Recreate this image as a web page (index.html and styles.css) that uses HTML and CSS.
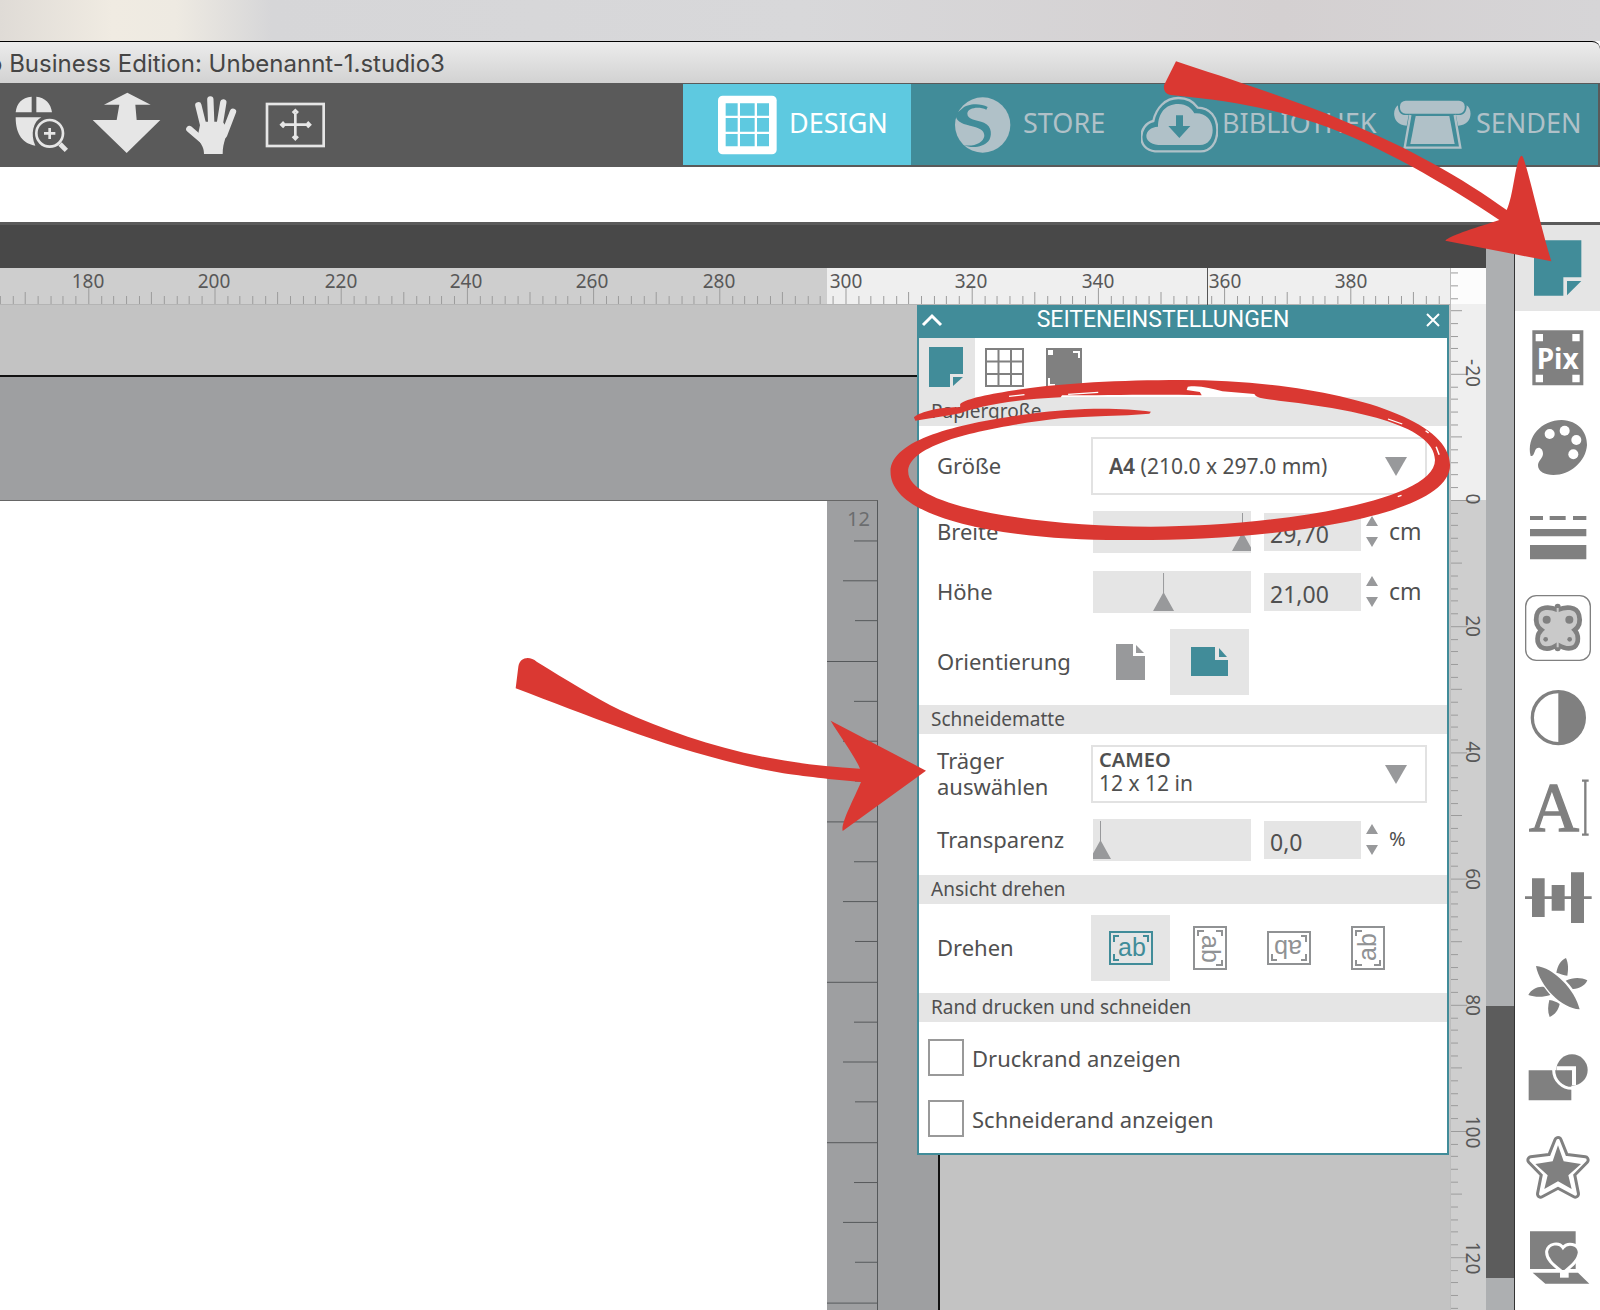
FILE: index.html
```html
<!DOCTYPE html>
<html lang="de">
<head>
<meta charset="utf-8">
<title>Business Edition: Unbenannt-1.studio3</title>
<link rel="stylesheet" href="styles.css">
</head>
<body>
<div class="app">
  <div class="desktop"></div>
  <header class="titlebar"><h1 class="title">o Business Edition: Unbenannt-1.studio3</h1></header>

  <div class="toolbar">
    <div class="tools">
      <button class="tool" aria-label="Zoom"><svg width="54" height="84" viewBox="45 159 162 252"><path d="M47 247C50 220 65 203 95 200V247ZM109 200C135 203 153 220 156 247H109ZM47 262H124C100 275 90 312 106 347C70 342 47 315 47 262Z"/><circle cx="149" cy="310" r="40" class="ln"/><path d="M149 294V327M132 310H166" class="ln"/><path d="M180 342L199 361" class="ln thick"/></svg></button>
      <button class="tool" aria-label="Vertikal"><svg width="69" height="84" viewBox="279 159 207 252"><path d="M382 188L452 224H406L410 270H481L380 369L278 270H350L358 224H312Z"/></svg></button>
      <button class="tool" aria-label="Verschieben"><svg width="55" height="84" viewBox="558 159 165 252"><path d="M568 297L618 340M595 226L612 295M631 208L634 290M670 217L658 290M699 245L672 315" class="finger"/><path d="M602 275H668L682 295C682 320 668 335 668 372H612C612 355 606 345 592 325Z"/></svg></button>
      <button class="tool" aria-label="Einpassen"><svg width="61" height="84" viewBox="795 159 183 252"><rect x="801" y="222" width="170" height="126" class="ln"/><path d="M886 248V322M850 284H924M878 249L886 241L894 249M878 319L886 327L894 319M852 276L844 284L852 292M922 276L930 284L922 292" class="ln"/></svg></button>
    </div>
    <nav class="tabs">
      <button class="tab tab-design"><svg width="59" height="81" viewBox="145 162 177 243"><rect x="145" y="197" width="176" height="176" rx="14"/><path d="M168 220H204V257H168ZM211 220H255V257H211ZM262 220H298V257H262ZM168 264H204V305H168ZM211 264H255V305H211ZM262 264H298V305H262ZM168 312H204V349H168ZM211 312H255V349H211ZM262 312H298V349H262Z" fill="#5ec9e0"/></svg><span>DESIGN</span></button>
      <button class="tab tab-store"><svg width="56" height="81" viewBox="855 162 168 243"><circle cx="938" cy="285" r="83"/><path d="M876 236C890 221 930 218 953 231L949 239C925 228 893 234 892 251C892 268 920 270 942 278C968 289 966 320 955 334C940 352 905 356 882 346C915 350 940 338 943 318C944 299 925 293 900 287C872 281 856 272 857 252Z" fill="#418c99"/></svg><span>STORE</span></button>
      <button class="tab tab-library"><svg width="77" height="81" viewBox="33 162 231 243"><path d="M75 364C20 360 22 285 70 273C78 235 105 204 145 204C170 204 190 214 203 233C240 233 262 262 262 300C262 340 240 364 212 364Z" class="line"/><path d="M85 345C35 340 40 292 84 290C85 250 105 222 145 222C170 222 185 235 193 250C225 247 248 270 248 300C248 325 235 345 210 345Z"/><path d="M138 256H159V288H181L148 324L115 288H138Z" fill="#418c99"/></svg><span>BIBLIOTHEK</span></button>
      <button class="tab tab-send"><svg width="78" height="81" viewBox="792 162 234 243"><rect x="810" y="212" width="194" height="39" rx="17"/><path d="M804 226C784 240 788 285 830 287L836 255H822C808 252 804 240 804 226ZM1010 226C1030 240 1026 285 984 287L978 255H992C1006 252 1010 240 1010 226Z"/><path d="M841 255L824 353H991L974 255" class="line"/><path d="M857 258H958L974 342H841Z"/></svg><span>SENDEN</span></button>
    </nav>
  </div>

  <div class="optionsbar"></div>

  <main class="workspace">
    <div class="docbar"></div>
    <div class="ruler-top">
      <svg class="fill" aria-hidden="true">
        <defs><pattern id="mm" x="845.5" y="0" width="126.2" height="37" patternUnits="userSpaceOnUse"><path d="M.5 20V36M63.5 24V36M13 28V36M25.7 28V36M38.3 28V36M51 28V36M76 28V36M88.6 28V36M101.2 28V36M113.8 28V36" stroke="#9b9b9b"/></pattern></defs>
        <rect width="100%" height="37" fill="#efefef"/><rect width="827" height="37" fill="#cecece"/>
        <rect width="100%" height="37" fill="url(#mm)"/>
        <rect y="36" width="100%" height="1" fill="#b4b4b4"/>
        <rect x="1207" width="1" height="37" fill="#555"/>
        <g class="num"><text x="88" y="20">180</text><text x="214" y="20">200</text><text x="341" y="20">220</text><text x="466" y="20">240</text><text x="592" y="20">260</text><text x="719" y="20">280</text><text x="846" y="20">300</text><text x="971" y="20">320</text><text x="1098" y="20">340</text><text x="1225" y="20">360</text><text x="1351" y="20">380</text></g>
      </svg>
    </div>
    <div class="ruler-side">
      <svg class="fill" aria-hidden="true">
        <defs><pattern id="mmv" x="0" y="232" width="36" height="126.2" patternUnits="userSpaceOnUse"><path d="M0 .5H17M0 63.5H12M0 13H8M0 25.7H8M0 38.3H8M0 51H8M0 76H8M0 88.6H8M0 101.2H8M0 113.8H8" stroke="#9b9b9b"/></pattern></defs>
        <rect width="36" height="36" fill="#fcfcfc"/><rect y="36" width="36" height="196" fill="#efefef"/><rect y="232" width="36" height="100%" fill="#cecece"/>
        <rect width="36" height="100%" fill="url(#mmv)"/><rect width="1" height="100%" fill="#bdbdbd"/>
        <g class="num"><text transform="translate(16 105) rotate(90)">-20</text><text transform="translate(16 231) rotate(90)">0</text><text transform="translate(16 358) rotate(90)">20</text><text transform="translate(16 484) rotate(90)">40</text><text transform="translate(16 611) rotate(90)">60</text><text transform="translate(16 737) rotate(90)">80</text><text transform="translate(16 864) rotate(90)">100</text><text transform="translate(16 990) rotate(90)">120</text></g>
      </svg>
    </div>

    <div class="canvas">
      <div class="mat">
        <div class="sheet"></div>
        <div class="mat-ruler">
          <svg class="fill" aria-hidden="true">
            <defs><pattern id="inch" y="160" width="50" height="160.4" patternUnits="userSpaceOnUse"><path d="M0 .5H50M27 40.5H50M16 80.5H50M28 120.5H50" stroke="#55585a"/></pattern></defs>
            <rect y="20" width="50" height="100%" fill="url(#inch)"/>
            <text x="20" y="25" class="inch">12</text>
          </svg>
        </div>
      </div>

      <section class="panel">
        <header class="panel-head">
          <button class="head-btn" aria-label="Einklappen"><svg width="24" height="14" viewBox="0 0 24 14"><path d="M4 12L13 3L22 12" fill="none" stroke="#fff" stroke-width="3"/></svg></button>
          <h2 class="panel-title">SEITENEINSTELLUNGEN</h2>
          <button class="head-btn" aria-label="Schließen"><svg width="16" height="16" viewBox="0 0 16 16"><path d="M2 2L14 14M14 2L2 14" stroke="#fff" stroke-width="2"/></svg></button>
        </header>
        <div class="panel-tabs">
          <button class="ptab on" aria-label="Seite"><svg width="56" height="59"><path d="M10 9H44V36H31V49H10Z" fill="#418c99"/><path d="M34 39H44L34 48Z" fill="#418c99"/></svg></button>
          <button class="ptab" aria-label="Gitter"><svg width="58" height="59"><path d="M11 11H48V48H11ZM23.500 11V48M36 11V48M11 23.500H48M11 36H48" fill="none" stroke="#808080" stroke-width="2"/></svg></button>
          <button class="ptab" aria-label="Passermarken"><svg width="58" height="59"><path d="M13 10H49V49H13Z" fill="#808080"/><path d="M15 12H20V17H15ZM40 13H47V20H45V15H40ZM15 40H17V46H22V48H15Z" fill="#fff"/></svg></button>
        </div>

        <h3 class="band">Papiergroße</h3>
        <div class="group group-page">
          <div class="row"><label class="name" for="size">Größe</label>
            <div class="picker"><select id="size" class="picker-native"><option>A4 (210.0 x 297.0 mm)</option></select><span class="face face-one"><b>A4</b> (210.0 x 297.0 mm)</span><i class="drop"></i></div></div>
          <div class="row slim"><label class="name" for="w">Breite</label>
            <div class="track"><input class="range" type="range" aria-label="Breite" min="0" max="1000" value="1000"></div>
            <input class="value" id="w" type="text" value="29,70">
            <span class="spin"><button class="up" aria-label="Mehr"></button><button class="down" aria-label="Weniger"></button></span><span class="unit">cm</span></div>
          <div class="row slim"><label class="name" for="h">Höhe</label>
            <div class="track"><input class="range" type="range" aria-label="Höhe" min="0" max="1000" value="444"></div>
            <input class="value" id="h" type="text" value="21,00">
            <span class="spin"><button class="up" aria-label="Mehr"></button><button class="down" aria-label="Weniger"></button></span><span class="unit">cm</span></div>
          <div class="row"><span class="name">Orientierung</span>
            <div class="choices">
              <button class="choice" aria-label="Hochformat"><svg width="30" height="36"><path d="M0 0H17V12H29V36H0Z" fill="#98999b"/><path d="M20 1L28 9H20Z" fill="#98999b"/></svg></button>
              <button class="choice on" aria-label="Querformat"><svg width="38" height="30"><path d="M0 0H24V13H37V29H0Z" fill="#418c99"/><path d="M28 1L36 10H28Z" fill="#418c99"/></svg></button>
            </div></div>
        </div>

        <h3 class="band">Schneidematte</h3>
        <div class="group">
          <div class="row"><label class="name" for="mat">Träger auswählen</label>
            <div class="picker"><select id="mat" class="picker-name"><option>CAMEO</option></select><span class="face face-under">12 x 12 in</span><i class="drop"></i></div></div>
          <div class="row slim"><label class="name" for="t">Transparenz</label>
            <div class="track"><input class="range" type="range" aria-label="Transparenz" min="0" max="1000" value="0"></div>
            <input class="value" id="t" type="text" value="0,0">
            <span class="spin"><button class="up" aria-label="Mehr"></button><button class="down" aria-label="Weniger"></button></span><span class="unit small">%</span></div>
        </div>

        <h3 class="band">Ansicht drehen</h3>
        <div class="group">
          <div class="row"><span class="name">Drehen</span>
            <div class="choices">
              <button class="choice turn on" aria-label="0 Grad"><svg width="46" height="46" viewBox="-23 -23 46 46"><g><rect x="-21" y="-16" width="42" height="32" class="ln2"/><path d="M-17 -6V-12H-12M12 -12H17V-6M-17 6V12H-12" class="ln2"/><text x="1" y="8">ab</text></g></svg></button>
              <button class="choice turn" aria-label="90 Grad"><svg width="46" height="46" viewBox="-23 -23 46 46"><g transform="rotate(90)"><rect x="-21" y="-16" width="42" height="32" class="ln2"/><path d="M-17 -6V-12H-12M12 -12H17V-6M-17 6V12H-12" class="ln2"/><text x="1" y="8">ab</text></g></svg></button>
              <button class="choice turn" aria-label="180 Grad"><svg width="46" height="46" viewBox="-23 -23 46 46"><g transform="rotate(180)"><rect x="-21" y="-16" width="42" height="32" class="ln2"/><path d="M-17 -6V-12H-12M12 -12H17V-6M-17 6V12H-12" class="ln2"/><text x="1" y="8">ab</text></g></svg></button>
              <button class="choice turn" aria-label="270 Grad"><svg width="46" height="46" viewBox="-23 -23 46 46"><g transform="rotate(270)"><rect x="-21" y="-16" width="42" height="32" class="ln2"/><path d="M-17 -6V-12H-12M12 -12H17V-6M-17 6V12H-12" class="ln2"/><text x="1" y="8">ab</text></g></svg></button>
            </div></div>
        </div>

        <h3 class="band">Rand drucken und schneiden</h3>
        <div class="checks">
          <label class="check"><input type="checkbox" class="box">Druckrand anzeigen</label>
          <label class="check"><input type="checkbox" class="box">Schneiderand anzeigen</label>
        </div>
      </section>
    </div>

    <div class="scroll"><div class="thumb"></div></div>

    <aside class="side">
      <button class="item on" aria-label="Seite"><svg viewBox="135 15 255 258"><path d="M192 61H334V172H280V227H192Z" fill="#418c99"/><path d="M291 183H334L291 226Z" fill="#418c99"/></svg></button>
      <button class="item" aria-label="PixScan"><svg viewBox="135 285 255 258"><path d="M187 331H340V496H187Z"/><path d="M197 342H219V364H197ZM307 342H329V364H307ZM197 464H219V487H197ZM307 464H329V487H307Z" fill="#fff"/><text x="263" y="447" class="pix">Pix</text></svg></button>
      <button class="item" aria-label="Füllung"><svg viewBox="135 555 255 258"><path d="M182 708C168 650 215 600 275 600C325 602 351 635 351 675C348 725 300 765 250 765C225 765 203 755 204 735C205 722 218 715 219 702C219 683 203 678 196 690C192 700 190 710 182 708Z"/><g fill="#fff"><circle cx="239" cy="642" r="15"/><circle cx="284" cy="632" r="15"/><circle cx="319" cy="660" r="15"/><circle cx="310" cy="703" r="15"/></g></svg></button>
      <button class="item" aria-label="Linienstil"><svg viewBox="135 825 255 258"><path d="M180 888H219V900H180ZM239 888H287V900H239ZM309 888H349V900H309ZM180 927H349V949H180ZM180 975H349V1018H180Z"/></svg></button>
      <button class="item" aria-label="Nachzeichnen"><svg viewBox="135 15 255 258"><rect x="167" y="47" width="194" height="194" rx="32" fill="none" stroke="#808080" stroke-width="4"/><path d="M263 80V205" stroke="#808080" stroke-width="18" stroke-linecap="round"/><path d="M263 90C240 79 207 78 200 105C195 128 203 142 214 150C200 163 198 188 213 201C230 211 250 203 263 194C278 203 296 211 313 201C328 188 326 163 314 150C325 142 333 128 327 105C320 78 286 79 263 90Z" fill="#c9c9c9" stroke="#808080" stroke-width="14"/><path d="M263 84V104M263 180V202" stroke="#c9c9c9" stroke-width="6"/><circle cx="230" cy="119" r="12"/><circle cx="298" cy="119" r="12"/><circle cx="227" cy="178" r="7"/><circle cx="299" cy="178" r="7"/></svg></button>
      <button class="item" aria-label="Bildeffekte"><svg viewBox="135 285 255 258"><circle cx="265" cy="413" r="78" fill="none" stroke="#808080" stroke-width="10"/><path d="M265 335A78 78 0 0 1 265 491Z"/></svg></button>
      <button class="item" aria-label="Text"><svg viewBox="135 555 255 258"><text x="252" y="752" class="glyph">A</text><path d="M336 602H356M346 602V764M336 764H356" fill="none" stroke="#808080" stroke-width="7"/></svg></button>
      <button class="item" aria-label="Ausrichten"><svg viewBox="135 825 255 258"><path d="M186 895H224V1011H186ZM245 915H284V992H245ZM303 877H342V1029H303ZM165 949H365V957H165Z"/></svg></button>
      <button class="item" aria-label="Replizieren"><svg viewBox="135 15 255 258"><path d="M198 78C250 82 316 150 329 208C275 205 210 140 198 78ZM259 98C263 78 272 60 288 54C296 72 295 90 292 107C280 105 270 101 259 98ZM287 122C310 112 332 112 352 121C345 138 325 148 308 147C302 138 295 130 287 122ZM241 165C220 172 195 172 175 165C183 148 205 138 222 141C228 149 234 157 241 165ZM238 180C250 182 260 186 269 192C266 208 255 225 239 231C232 214 234 197 238 180Z"/></svg></button>
      <button class="item" aria-label="Modifizieren"><svg viewBox="135 285 255 258"><circle cx="306" cy="390" r="47"/><path d="M176 391H304V481H176Z"/><path d="M312 436V385H260" fill="none" stroke="#fff" stroke-width="12"/><path d="M251 390A55 55 0 0 0 308 445" fill="none" stroke="#fff" stroke-width="9"/></svg></button>
      <button class="item" aria-label="Versatz"><svg viewBox="135 555 255 258"><path d="M264 602L284 652L345 660L304 702L316 762L264 734L212 762L224 702L183 660L244 652Z" fill="none" stroke="#808080" stroke-width="28" stroke-linejoin="round"/><path d="M264 602L284 652L345 660L304 702L316 762L264 734L212 762L224 702L183 660L244 652Z" fill="#fff" stroke="#fff" stroke-width="10" stroke-linejoin="round"/><path d="M264 616L281 664L333 672L295 706L305 747L264 724L223 747L233 706L196 672L248 664Z"/></svg></button>
      <button class="item" aria-label="Mein Design"><svg viewBox="135 825 255 258"><path d="M180 874H317V987H180ZM188 998H324L358 1031H226Z"/><path d="M280 998C255 978 228 960 230 934C235 908 268 906 279 923C292 906 325 910 328 936C326 962 302 980 280 998Z" stroke="#fff" stroke-width="9"/><path d="M270 990H296V1013H270Z" fill="#fff"/></svg></button>
    </aside>
  </main>

  <svg class="mark mark-side" viewBox="0 0 1410 870" aria-hidden="true"><path d="M138 94C260 135 470 200 640 272C830 350 1000 445 1130 540C1150 500 1155 400 1172 379Q1176 374 1180 384C1200 440 1230 580 1264 694L946 632C960 615 1050 590 1108 570C950 465 750 345 560 280C420 235 300 212 130 196C100 196 98 170 105 160Z"/></svg>
  <svg class="mark mark-mat" viewBox="0 0 1320 1110" aria-hidden="true"><path d="M47 625L55 560C60 530 90 528 110 545C200 600 280 650 360 690C560 780 780 850 1080 866C1060 820 1020 770 992 722L1278 872L1028 1053C1022 1030 1060 960 1083 906C1000 900 900 887 850 880C560 830 300 720 47 625Z"/></svg>
  <svg class="mark mark-size" viewBox="0 0 1568 810" preserveAspectRatio="none" aria-hidden="true"><path d="M720 365C640 352 520 352 400 371C240 395 28 440 28 545C28 690 340 750 640 750C1000 755 1515 690 1515 525C1515 370 1160 270 800 270C640 270 480 280 380 297C300 310 230 325 213 342V352C170 350 110 362 90 382L94 392C130 385 170 380 213 370C260 350 340 330 480 322L484 316C600 316 740 312 855 316L850 306L815 300L818 290C850 285 880 295 910 304L995 312C1000 325 1020 326 1060 332C1240 355 1475 400 1475 510C1475 640 1020 710 720 710C420 710 75 650 75 545C75 450 330 405 480 385C560 378 640 378 716 371Z"/><path d="M343 319L384 314M500 313L580 307M1350 387L1388 402M1450 422L1458 429M1478 470L1486 494M1376 620L1386 616" stroke="#fff" stroke-width="4"/></svg>
</div>
</body>
</html>
```
FILE: styles.css
```css
* { box-sizing: border-box; }
body { margin: 0; font-family: "Noto Sans", "Open Sans", sans-serif; color: #505050; }
button { margin: 0; padding: 0; border: 0; background: none; font: inherit; color: inherit; }
h1, h2, h3 { margin: 0; font-weight: 400; }
svg { display: block; }

.app { position: relative; display: flex; flex-direction: column; min-height: 100vh; overflow: hidden; background: #fff; }
.desktop { height: 41px; background: linear-gradient(90deg, #dfdbd6, #f0ebe2 7%, #eeeae2 11%, #d6d6d8 17%, #d8d8da 50%, #d4d0d1 80%, #d6d5d7); }
.titlebar { height: 42px; border-top: 1px solid #000; background: linear-gradient(#ececec, #d2d2d2); border-top-right-radius: 8px; overflow: hidden; }
.title { margin-left: -12px; padding-top: 1px; font: 24px/41px Inter, "Liberation Sans", sans-serif; color: #454545; white-space: nowrap; }

.toolbar { display: flex; justify-content: space-between; height: 84px; padding-right: 2px; background: #5a5a5a; }
.tools { display: flex; gap: 24px; padding-left: 15px; }
.tool svg { overflow: visible; fill: #e6e6e6; }
.ln { fill: none; stroke: #e6e6e6; stroke-width: 8; }
.thick { stroke-width: 14; }
.finger { fill: none; stroke: #e6e6e6; stroke-width: 19; stroke-linecap: round; }
.tabs { display: grid; grid-template-columns: 228px 230px 253px 204px; margin: 1px 0 2px; background: #418c99; }
.tab { display: flex; align-items: center; gap: 4px; font-size: 27px; line-height: 36px; color: #b0c1c8; white-space: nowrap; }
.tab span { padding-bottom: 4px; }
.tab svg { flex: none; fill: currentColor; }
.tab .line { fill: none; stroke: currentColor; stroke-width: 7; }
.tab-design { gap: 12px; padding-left: 35px; background: #5ec9e0; color: #fff; }
.tab-store { gap: 12px; padding-left: 44px; }
.optionsbar { height: 55px; }

.workspace { flex: 1; display: grid; grid-template: 43px 37px 1fr / 1fr 36px 28px 86px; border-top: 3px solid #5a5a5a; }
.docbar { grid-column: 1 / 3; background: #484848; }
.ruler-top { grid-area: 2 / 1; overflow: hidden; }
.ruler-side { grid-area: 2 / 2 / 4 / 3; position: relative; overflow: hidden; }
.ruler-side .fill, .mat-ruler .fill { position: absolute; inset: 0; }
.fill { width: 100%; height: 100%; shape-rendering: crispEdges; }
.num { font-size: 19px; fill: #585858; text-anchor: middle; }

.canvas { grid-area: 3 / 1; position: relative; overflow: hidden; background: #c3c3c3; }
.mat { position: absolute; left: 0; top: 70px; bottom: 0; width: 940px; display: flex; padding-top: 123px; border-top: 2px solid #111; border-right: 2px solid #111; background: #9e9fa1; }
.sheet { width: 827px; border-top: 1px solid #666; background: #fff; }
.mat-ruler { position: relative; width: 51px; border-top: 1px solid #666; border-right: 1px solid #55585a; }
.inch { font-size: 20px; fill: #6b6d6f; }

.panel { position: absolute; top: 0; right: 1px; width: 532px; border: 2px solid #418c99; border-top: 0; background: #fff; }
.panel-head { display: flex; align-items: center; justify-content: space-between; height: 33px; padding: 0 6px 3px 0; background: #418c99; color: #fff; }
.panel-title { padding-right: 42px; font: 23px/28px Roboto, sans-serif; }
.panel-tabs { display: flex; height: 59px; }
.ptab.on, .choice.on, .item.on { background: #e5e5e5; }
.band { height: 29px; padding-left: 12px; background: #e5e5e5; font-size: 19px; line-height: 29px; }
.group { display: flex; flex-direction: column; gap: 14px; padding: 11px 20px 12px 18px; font-size: 22px; line-height: 26px; }
.group-page { padding-bottom: 10px; }
.row { display: flex; align-items: center; }
.slim { height: 46px; }
.name { width: 154px; padding-bottom: 2px; }
.slim .name { width: 156px; }
.picker { position: relative; display: flex; align-items: center; justify-content: space-between; width: 336px; height: 58px; padding: 0 18px 0 6px; border: 2px solid #e2e2e2; }
.picker-native { position: absolute; inset: 0; width: 100%; opacity: 0; }
.picker-name { position: absolute; inset: 0; width: 100%; padding: 2px 0 30px 6px; border: 0; background: none; appearance: none; font: 600 20px/22px "Noto Sans", sans-serif; color: inherit; }
.face { font-size: 21px; line-height: 22px; }
.face-one { padding-left: 10px; }
.face-under { padding-top: 18px; pointer-events: none; }
.face b { font-weight: 600; }
.drop { border: 11px solid transparent; border-top: 19px solid #98999b; border-bottom: 0; }
.track { width: 158px; height: 42px; overflow: hidden; background: #e5e5e5; }
.range { appearance: none; display: block; width: 164px; height: 42px; margin: 0 -3px; background: none; }
.range::-webkit-slider-thumb { appearance: none; width: 22px; height: 38px; background: #98999b; clip-path: polygon(10px 0, 11px 0, 11px 20px, 21px 38px, 0 38px, 10px 20px); }
.value { width: 97px; height: 38px; margin-left: 13px; padding: 3px 6px 0; border: 0; background: #e5e5e5; font: 23px/26px "Noto Sans", sans-serif; color: inherit; }
.spin { display: flex; flex-direction: column; gap: 11px; margin-left: 5px; padding-bottom: 2px; }
.up, .down { border: 6px solid transparent; }
.up { border-top: 0; border-bottom: 10px solid #98999b; }
.down { border-bottom: 0; border-top: 10px solid #98999b; }
.unit { margin-left: 11px; padding-bottom: 2px; font-size: 23px; }
.unit.small { font-size: 20px; }
.choices { display: flex; }
.choice { display: flex; align-items: center; justify-content: center; width: 79px; height: 66px; }
.turn { color: #909294; }
.turn.on { color: #418c99; }
.turn svg { fill: currentColor; }
.turn text { font: 25px "Liberation Sans", sans-serif; text-anchor: middle; }
.ln2 { fill: none; stroke: currentColor; stroke-width: 2; }
.checks { display: flex; flex-direction: column; gap: 24px; padding: 17px 9px 16px; }
.check { display: flex; align-items: center; gap: 8px; font-size: 22px; line-height: 36px; }
.box { appearance: none; width: 36px; height: 37px; margin: 0; border: 2px solid #999; background: #fff; }

.scroll { grid-area: 1 / 3 / 4 / 4; display: flex; flex-direction: column; justify-content: flex-end; padding-bottom: 32px; background: #adafb1; }
.thumb { height: 272px; background: #5c5c5c; }
.side { grid-area: 1 / 4 / 4 / 5; display: flex; flex-direction: column; gap: 4px; border-left: 1px solid #333; background: #fff; }
.item { width: 85px; height: 86px; }
.item svg { width: 85px; height: 86px; fill: #808080; }
.pix { font: 700 84px "Noto Sans", sans-serif; fill: #fff; text-anchor: middle; }
.glyph { font: 208px "Liberation Serif", serif; text-anchor: middle; stroke: #808080; stroke-width: 4; }

.mark { position: absolute; fill: #da3832; pointer-events: none; }
.mark-side { top: 30px; right: 0; width: 470px; height: 290px; }
.mark-mat { top: 480px; right: 660px; width: 440px; height: 370px; }
.mark-size { top: 290px; right: 130px; width: 590px; height: 270px; }
```
